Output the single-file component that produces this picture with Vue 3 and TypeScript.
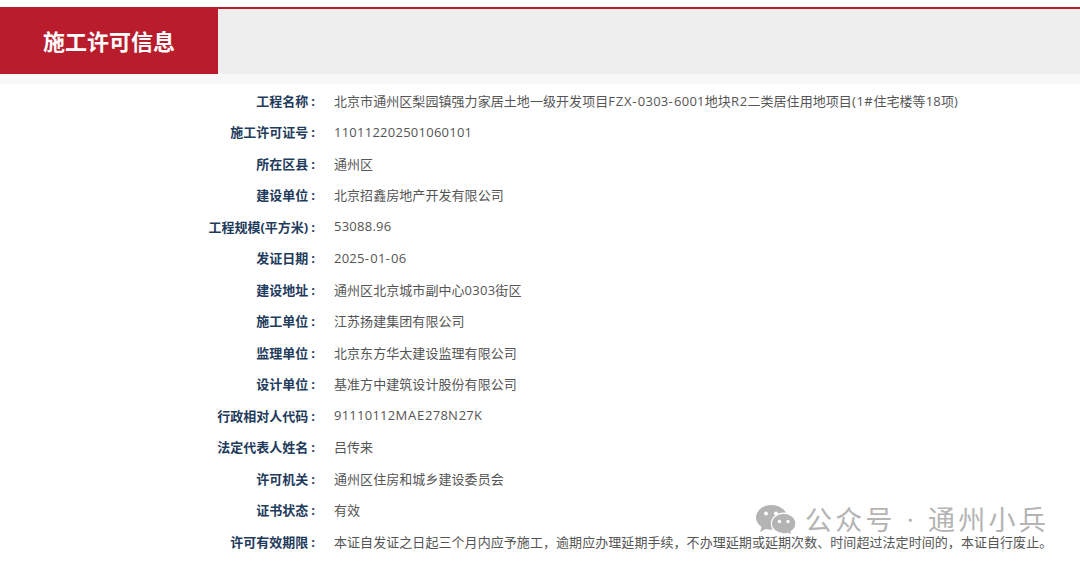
<script setup lang="ts">
interface Row { label: string; value: string }
interface Run { text: string; kind: string }
const rows: Row[] = [
  { label: '工程名称', value: '北京市通州区梨园镇强力家居土地一级开发项目FZX-0303-6001地块R2二类居住用地项目(1#住宅楼等18项)' },
  { label: '施工许可证号', value: '110112202501060101' },
  { label: '所在区县', value: '通州区' },
  { label: '建设单位', value: '北京招鑫房地产开发有限公司' },
  { label: '工程规模(平方米)', value: '53088.96' },
  { label: '发证日期', value: '2025-01-06' },
  { label: '建设地址', value: '通州区北京城市副中心0303街区' },
  { label: '施工单位', value: '江苏扬建集团有限公司' },
  { label: '监理单位', value: '北京东方华太建设监理有限公司' },
  { label: '设计单位', value: '基准方中建筑设计股份有限公司' },
  { label: '行政相对人代码', value: '91110112MAE278N27K' },
  { label: '法定代表人姓名', value: '吕传来' },
  { label: '许可机关', value: '通州区住房和城乡建设委员会' },
  { label: '证书状态', value: '有效' },
  { label: '许可有效期限', value: '本证自发证之日起三个月内应予施工\uFF0C逾期应办理延期手续\uFF0C不办理延期或延期次数、时间超过法定时间的\uFF0C本证自行废止。' },
]
function kindOf(text: string): string {
  if (text === '-') return 'hyphen'
  if (/^[0-9.]/.test(text)) return 'digits'
  if (/^[\x20-\x7e]/.test(text)) return 'caps'
  return 'cjk'
}
function runs(value: string): Run[] {
  return (value.match(/-|[0-9.]+|[\x20-\x7e]+?(?=[0-9.-]|[^\x20-\x7e]|$)|[^\x20-\x7e]+/g) ?? []).map((text) => ({
    text,
    kind: kindOf(text),
  }))
}
</script>

<template>
  <div class="page">
    <header class="head">
      <h1 class="title">施工许可信息</h1>
      <div class="fill"></div>
    </header>
    <div class="strip"></div>
    <dl class="list">
      <div v-for="r in rows" :key="r.label" class="row">
        <dt class="label">{{ r.label }}<span class="colon">:</span></dt>
        <dd class="value"><span v-for="(s, i) in runs(r.value)" :key="i" :class="s.kind">{{ s.text }}</span></dd>
      </div>
    </dl>
    <div class="mark">
      <svg class="wx" width="42" height="32" viewBox="0 0 42 32">
        <path fill="#b4b4b4" d="M16 1C7.700 1 1 6.600 1 13.400c0 3.900 2.200 7.200 5.600 9.500L5 28l5.700-3c1.700.5 3.500.8 5.300.8.500 0 1 0 1.500-.1-.4-1.200-.6-2.400-.6-3.700 0-6.400 6.100-11.500 13.600-11.500h1C30 4.800 23.600 1 16 1z"/>
        <circle cx="11" cy="9.500" r="2" fill="#fff"/>
        <circle cx="21" cy="9.500" r="2" fill="#fff"/>
        <path fill="#b4b4b4" stroke="#fff" stroke-width="1.200" d="M41 21.500c0-5.700-5.600-10.300-12.300-10.300S16.400 15.800 16.400 21.500s5.600 10.300 12.300 10.300c1.400 0 2.800-.2 4.100-.6l4.300 2.300-1.100-3.800c3-1.900 4.900-4.900 4.900-8.200z" transform="translate(0 -2)"/>
        <circle cx="24.500" cy="17.500" r="1.700" fill="#fff"/>
        <circle cx="33" cy="17.500" r="1.700" fill="#fff"/>
      </svg>
      <span class="mark-text">公众号 · 通州小兵</span>
    </div>
  </div>
</template>

<style scoped>
.page {
  position: relative;
  width: 1080px;
  height: 563px;
  overflow: hidden;
  background: #fff;
  font-family: "Open Sans", "Noto Sans CJK SC", sans-serif;
}
.head {
  display: flex;
  height: 67px;
  margin-top: 7px;
  border-top: 2px solid #b91c2c;
  box-sizing: border-box;
  background: #eeeeee;
}
.title {
  width: 218px;
  margin: -2px 0 0;
  height: 67px;
  box-sizing: border-box;
  padding-right: 43px;
  background: #b91c2c;
  color: #fff;
  font-size: 22px;
  font-weight: 700;
  line-height: 69px;
  text-align: right;
}
.fill { flex: 1; }
.strip {
  height: 10px;
  background: #f8f8f8;
}
.list {
  margin: 0.5px 0 0;
  padding: 0;
}
.row {
  display: flex;
  height: 31.5px;
  align-items: center;
}
.label {
  width: 315px;
  font-size: 13px;
  font-weight: 700;
  color: #1f3b5c;
  text-align: right;
}
.colon { margin-left: 3px; }
.value {
  margin: 0 0 0 19px;
  font-size: 13px;
  color: #555;
  white-space: nowrap;
}
.cjk { letter-spacing: 0.06px; }
.digits { letter-spacing: 0.25px; }
.caps { letter-spacing: 0.8px; }
.hyphen { letter-spacing: 1.3px; }
.mark {
  position: absolute;
  left: 755px;
  top: 502px;
  display: flex;
  align-items: center;
  gap: 8px;
  color: #b4b4b4;
}
.mark-text {
  font-size: 27px;
  letter-spacing: 3.300px;
  word-spacing: 0.5px;
  white-space: nowrap;
  line-height: 36px;
}
</style>
<style>
html, body { margin: 0; padding: 0; }
</style>
